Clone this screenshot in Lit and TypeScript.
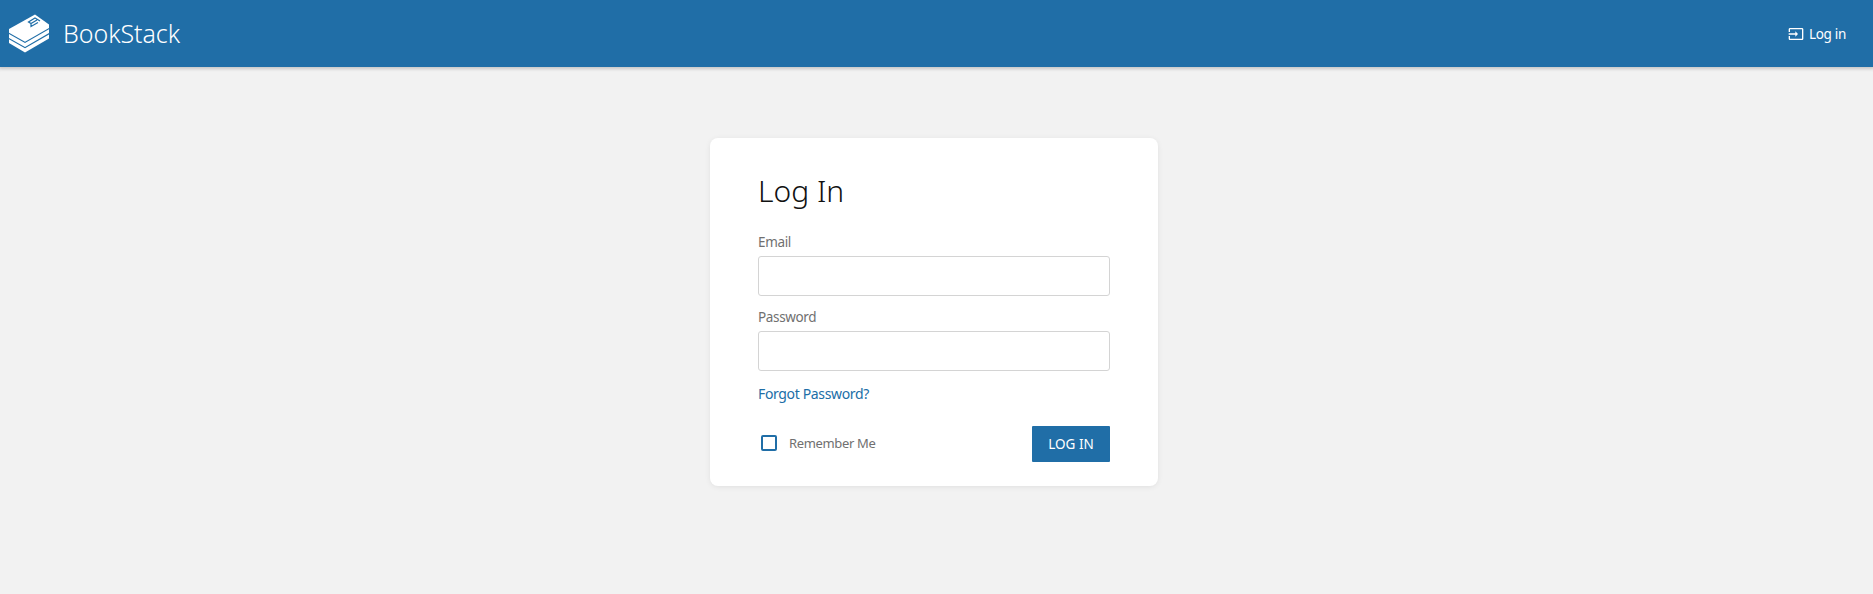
import { LitElement, html, css } from "lit";
import { customElement } from "lit/decorators.js";

@customElement("app-root")
export class AppRoot extends LitElement {
  static styles = css`
    :host {
      display: block;
      min-height: 594px;
      background: #f2f2f2;
      font-family: "Noto Sans", sans-serif;
      color: #444;
      font-size: 14px;
    }
    header {
      height: 67px;
      background: #206ea7;
      color: #fff;
      display: flex;
      align-items: center;
      justify-content: space-between;
      padding: 0 27px 0 8px;
      box-shadow: 0 1px 3px 1px rgba(76, 76, 76, 0.26);
      box-sizing: border-box;
    }
    .brand { display: flex; align-items: center; gap: 13px; }
    .logo { width: 42px; height: 40px; display: block; }
    .brand-name { font-size: 25px; font-weight: 350; line-height: 33px; padding-bottom: 1px; letter-spacing: -0.05px; }
    .nav-login { display: flex; align-items: center; gap: 5px; font-size: 13.5px; letter-spacing: -0.3px; }
    .nav-login svg { width: 16px; height: 16px; fill: #fff; display: block; }
    main { display: flex; justify-content: center; padding: 71px 5px 0 0; }
    .card {
      width: 448px;
      box-sizing: border-box;
      background: #fff;
      border-radius: 8px;
      box-shadow: 0 1px 6px -1px rgba(0, 0, 0, 0.1);
      padding: 32px 48px 24px;
      height: 348px;
    }
    h1 {
      margin: 0;
      font-size: 30px;
      font-weight: 300;
      line-height: 42px;
      color: #111;
      letter-spacing: 0;
    }
    .field-label {
      display: block;
      color: #707070;
      font-size: 13.5px;
      line-height: 20px;
      letter-spacing: -0.35px;
    }
    .form { margin-top: 20px; display: flex; flex-direction: column; }
    .input {
      height: 40px;
      box-sizing: border-box;
      border: 1px solid #d4d4d4;
      border-radius: 3px;
      background: #fff;
      margin: 4px 0 11px;
    }
    a {
      color: #206ea7;
      text-decoration: none;
      font-size: 14px;
      line-height: 20px;
      margin-top: 2px;
      letter-spacing: -0.35px;
    }
    .actions {
      display: flex;
      align-items: center;
      justify-content: space-between;
      margin-top: 22px;
    }
    .remember { display: flex; align-items: center; gap: 12px; padding-left: 3px; padding-bottom: 2px; color: #707070; font-size: 13px; letter-spacing: -0.35px; }
    .box {
      width: 16px;
      height: 16px;
      box-sizing: border-box;
      border: 2px solid #206ea7;
      border-radius: 2px;
    }
    button {
      all: unset;
      width: 78px;
      height: 36px;
      box-sizing: border-box;
      display: flex;
      align-items: center;
      justify-content: center;
      background: #206ea7;
      color: #fff;
      border-radius: 1px;
      font-size: 13.5px;
      text-transform: uppercase;
      font-family: inherit;
    }
  `;

  render() {
    return html`
      <header>
        <div class="brand">
          <svg class="logo" viewBox="0 0 42 40" aria-hidden="true">
            <path fill="#fff" d="M1 15 27 .5l14 10v3.500L17 27.800 1 18.800z" />
            <path fill="none" stroke="#206ea7" stroke-width="1.200" d="M32 7 27 4 20.500 8l2.500 1.500L29 6M23 9.500v3l7-4" />
            <path fill="#fff" d="M1 20l16 9 24-13.800v3.800L17 33 1 24z" />
            <path fill="#fff" d="M1 25.200l16 9 24-13.800v4L17 38.500 1 29z" />
          </svg>
          <span class="brand-name">BookStack</span>
        </div>
        <div class="nav-login">
          <svg viewBox="0 0 24 24" aria-hidden="true">
            <path d="M21 3.010H3c-1.100 0-2 .9-2 2V9h2V4.990h18v14.030H3V15H1v4.010c0 1.100.9 1.980 2 1.980h18c1.100 0 2-.88 2-1.980v-14c0-1.110-.9-2-2-2zM11 16l4-4-4-4v3H1v2h10v3z" />
          </svg>
          <span>Log in</span>
        </div>
      </header>
      <main>
        <section class="card">
          <h1>Log In</h1>
          <div class="form">
            <label class="field-label">Email</label>
            <div class="input"></div>
            <label class="field-label">Password</label>
            <div class="input"></div>
            <a href="#">Forgot Password?</a>
            <div class="actions">
              <div class="remember"><span class="box"></span><span>Remember Me</span></div>
              <button>Log In</button>
            </div>
          </div>
        </section>
      </main>
    `;
  }
}
